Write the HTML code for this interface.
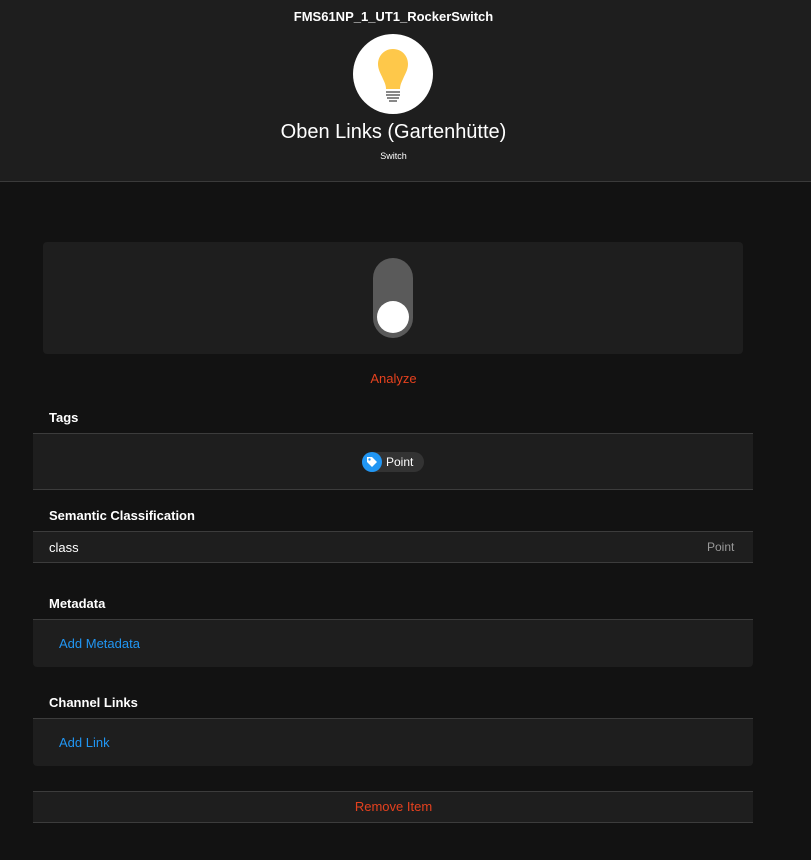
<!DOCTYPE html>
<html><head><style>
*{margin:0;padding:0;box-sizing:border-box}
body{width:811px;height:860px;background:#121212;font-family:"Liberation Sans",sans-serif;color:#fff;position:relative;overflow:hidden}
.hdr{position:absolute;left:0;top:0;width:811px;height:182px;background:#1e1e1e;border-bottom:1px solid #3a3a3a}
.abs{position:absolute}
.t{font-size:13px;font-weight:bold}
.sec{position:absolute;left:33px;width:720px;background:#1e1e1e}
.line{border-top:1px solid #3c3c3c}
</style></head><body>
<div class="hdr">
<div class="abs" style="top:9px;width:787px;text-align:center;font-size:13px;font-weight:bold">FMS61NP_1_UT1_RockerSwitch</div>
<div class="abs" style="left:353px;top:34px;width:80px;height:80px;border-radius:50%;background:#fff">
<svg width="80" height="80" viewBox="0 0 80 80"><path d="M40 15c-9 0-15 7-15 15 0 6 3 10 5 15 2 4 3 7 3 10h14c0-3 1-6 3-10 2-5 5-9 5-15 0-8-6-15-15-15z" fill="#fec84a"/><rect x="33" y="57" width="14" height="2" fill="#888"/><rect x="33" y="60" width="14" height="2" fill="#888"/><rect x="34" y="63" width="12" height="2" fill="#888"/><rect x="36" y="66" width="8" height="2" fill="#888"/></svg>
</div>
<div class="abs" style="top:121px;width:787px;text-align:center;font-size:20px">Oben Links (Gartenhütte)</div>
<div class="abs" style="top:151px;width:787px;text-align:center;font-size:9px">Switch</div>
</div>
<div class="abs" style="left:43px;top:242px;width:700px;height:112px;background:#1e1e1e;border-radius:4px"></div>
<div class="abs" style="left:373px;top:258px;width:40px;height:80px;border-radius:20px;background:#5a5a5a"></div>
<div class="abs" style="left:377px;top:301px;width:32px;height:32px;border-radius:50%;background:#fff"></div>
<div class="abs" style="top:371px;width:787px;text-align:center;font-size:13px;color:#e5411e">Analyze</div>

<div class="abs t" style="left:49px;top:410px">Tags</div>
<div class="sec line" style="top:433px;height:57px;border-bottom:1px solid #3c3c3c"></div>
<div class="abs" style="left:362px;top:452px;width:62px;height:20px;border-radius:10px;background:#333"></div>
<div class="abs" style="left:362px;top:452px;width:20px;height:20px;border-radius:50%;background:#2196f3"><svg width="20" height="20"><path d="M5 5h5l5 5-5 5-5-5z" fill="#fff"/><circle cx="7.5" cy="7.5" r="1.2" fill="#2196f3"/></svg></div>
<div class="abs" style="left:386px;top:455px;font-size:12px">Point</div>

<div class="abs t" style="left:49px;top:508px">Semantic Classification</div>
<div class="sec line" style="top:531px;height:32px;border-bottom:1px solid #3c3c3c"></div>
<div class="abs" style="left:49px;top:540px;font-size:13px">class</div>
<div class="abs" style="left:707px;top:540px;font-size:12px;color:#999">Point</div>

<div class="abs t" style="left:49px;top:596px">Metadata</div>
<div class="sec line" style="top:619px;height:48px;border-radius:0 0 4px 4px"></div>
<div class="abs" style="left:59px;top:636px;font-size:13px;color:#2196f3">Add Metadata</div>

<div class="abs t" style="left:49px;top:695px">Channel Links</div>
<div class="sec line" style="top:718px;height:48px;border-radius:0 0 4px 4px"></div>
<div class="abs" style="left:59px;top:735px;font-size:13px;color:#2196f3">Add Link</div>

<div class="sec line" style="top:791px;height:32px;border-bottom:1px solid #3c3c3c"></div>
<div class="abs" style="top:799px;width:787px;text-align:center;font-size:13px;color:#e5411e">Remove Item</div>
</body></html>
